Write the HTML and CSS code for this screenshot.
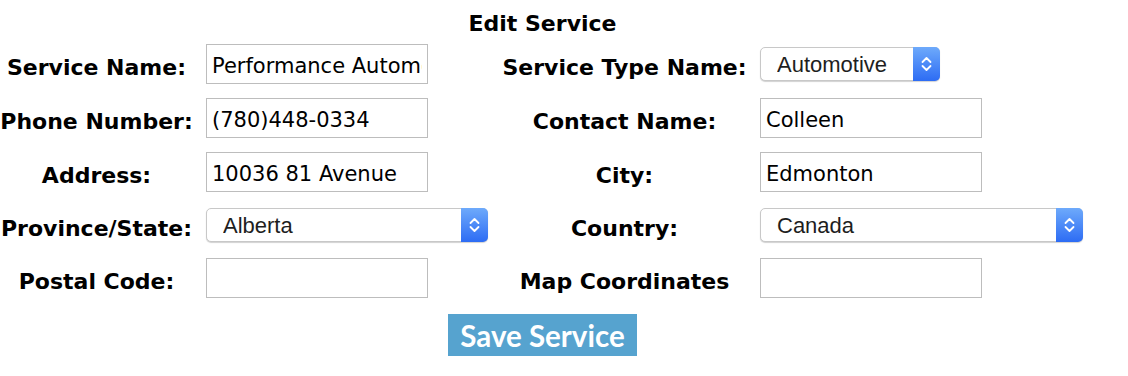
FILE: index.html
```html
<html>

<head>
    <title>Edit Service</title>
    <meta name="viewport" content="width=device-width, initial-scale=1.0">
    <link rel="stylesheet" href="styles.css">
</head>

<body>
    <form id="editService">
        <table class="form-table">
            <colgroup>
                <col class="col-label">
                <col class="col-field">
                <col class="col-label2">
                <col class="col-field2">
            </colgroup>
            <tr>
                <th colspan="4" class="title">Edit Service</th>
            </tr>
            <tr>
                <td class="label"><span>Service Name:</span></td>
                <td class="field"><input type="text" value="Performance Automotive"></td>
                <td class="label"><span>Service Type Name:</span></td>
                <td class="field field2">
                    <span class="select-wrap">
                        <select class="sel-type">
                            <option>Automotive</option>
                        </select>
                        <span class="stepper"><svg width="27" height="34" viewBox="0 0 27 34"><path d="M9.5 15 L13.5 11 L17.5 15 M9.5 19 L13.5 23 L17.5 19" fill="none" stroke="#fff" stroke-width="1.8" stroke-linecap="round" stroke-linejoin="round"/></svg></span>
                    </span>
                </td>
            </tr>
            <tr>
                <td class="label"><span>Phone Number:</span></td>
                <td class="field"><input type="text" value="(780)448-0334"></td>
                <td class="label"><span>Contact Name:</span></td>
                <td class="field field2"><input type="text" value="Colleen"></td>
            </tr>
            <tr>
                <td class="label"><span>Address:</span></td>
                <td class="field"><input type="text" value="10036 81 Avenue"></td>
                <td class="label"><span>City:</span></td>
                <td class="field field2"><input type="text" value="Edmonton"></td>
            </tr>
            <tr class="select-row">
                <td class="label"><span>Province/State:</span></td>
                <td class="field">
                    <span class="select-wrap">
                        <select class="sel-province">
                            <option>Alberta</option>
                        </select>
                        <span class="stepper"><svg width="27" height="34" viewBox="0 0 27 34"><path d="M9.5 15 L13.5 11 L17.5 15 M9.5 19 L13.5 23 L17.5 19" fill="none" stroke="#fff" stroke-width="1.8" stroke-linecap="round" stroke-linejoin="round"/></svg></span>
                    </span>
                </td>
                <td class="label"><span>Country:</span></td>
                <td class="field field2">
                    <span class="select-wrap">
                        <select class="sel-country">
                            <option>Canada</option>
                        </select>
                        <span class="stepper"><svg width="27" height="34" viewBox="0 0 27 34"><path d="M9.5 15 L13.5 11 L17.5 15 M9.5 19 L13.5 23 L17.5 19" fill="none" stroke="#fff" stroke-width="1.8" stroke-linecap="round" stroke-linejoin="round"/></svg></span>
                    </span>
                </td>
            </tr>
            <tr>
                <td class="label"><span>Postal Code:</span></td>
                <td class="field"><input type="text" value=""></td>
                <td class="label"><span>Map Coordinates</span></td>
                <td class="field field2"><input type="text" value=""></td>
            </tr>
            <tr>
                <td colspan="4" class="submit-cell"><button type="button" class="save-btn">Save Service</button></td>
            </tr>
        </table>
    </form>
</body>

</html>
```

FILE: styles.css
```css
body {
    margin: 0;
    font-family: "DejaVu Sans", Verdana, sans-serif;
    color: black;
}

.form-table {
    width: 1085px;
    table-layout: fixed;
    border-collapse: collapse;
    border-spacing: 0;
}

.col-label {
    width: 193px;
}

.col-field {
    width: 305px;
}

.col-label2 {
    width: 253px;
}

.col-field2 {
    width: 334px;
}

.title {
    padding: 11px 0 0 0;
    font-size: 22px;
    line-height: 26px;
    font-weight: bold;
    text-align: center;
}

.form-table td {
    padding: 7px 0;
    vertical-align: middle;
}

.label {
    text-align: center;
    white-space: nowrap;
    font-size: 22px;
    font-weight: bold;
}

.label span {
    display: block;
    padding-top: 6px;
}

.field {
    padding-left: 13px !important;
}

.field2 {
    padding-left: 9px !important;
}

.select-row td {
    height: 52px;
}

input[type="text"] {
    box-sizing: border-box;
    width: 222px;
    height: 40px;
    margin: 0;
    padding: 4px 5px 0 5px;
    border: 1px solid #bdbdbd;
    border-radius: 0;
    font-family: "DejaVu Sans", Verdana, sans-serif;
    font-size: 21px;
    color: black;
    background: white;
}

.select-wrap {
    position: relative;
    display: inline-block;
    vertical-align: middle;
}

select {
    -webkit-appearance: none;
    appearance: none;
    box-sizing: border-box;
    height: 34px;
    margin: 0;
    padding: 0 30px 0 16px;
    border: 1px solid #c8c8c8;
    border-radius: 5px;
    box-shadow: 0 1px 1px rgba(0, 0, 0, 0.18);
    background: white;
    font-family: "Liberation Sans", Arial, sans-serif;
    font-size: 22px;
    color: #1e1e1e;
    display: block;
}

.sel-type {
    width: 180px;
}

.sel-province {
    width: 282px;
}

.sel-country {
    width: 323px;
}

.stepper {
    position: absolute;
    top: 0;
    right: 0;
    width: 27px;
    height: 34px;
    border-radius: 0 5px 5px 0;
    background: linear-gradient(#6eaafb, #2d6cf4);
    pointer-events: none;
}

.stepper svg {
    display: block;
}

.submit-cell {
    text-align: center;
    padding-top: 9px !important;
}

.save-btn {
    height: 42px;
    padding: 0 12px;
    border: none;
    background-color: rgb(86, 163, 207);
    color: white;
    font-family: Lato, "Open Sans", sans-serif;
    font-size: 29.5px;
    font-weight: bold;
}
```
